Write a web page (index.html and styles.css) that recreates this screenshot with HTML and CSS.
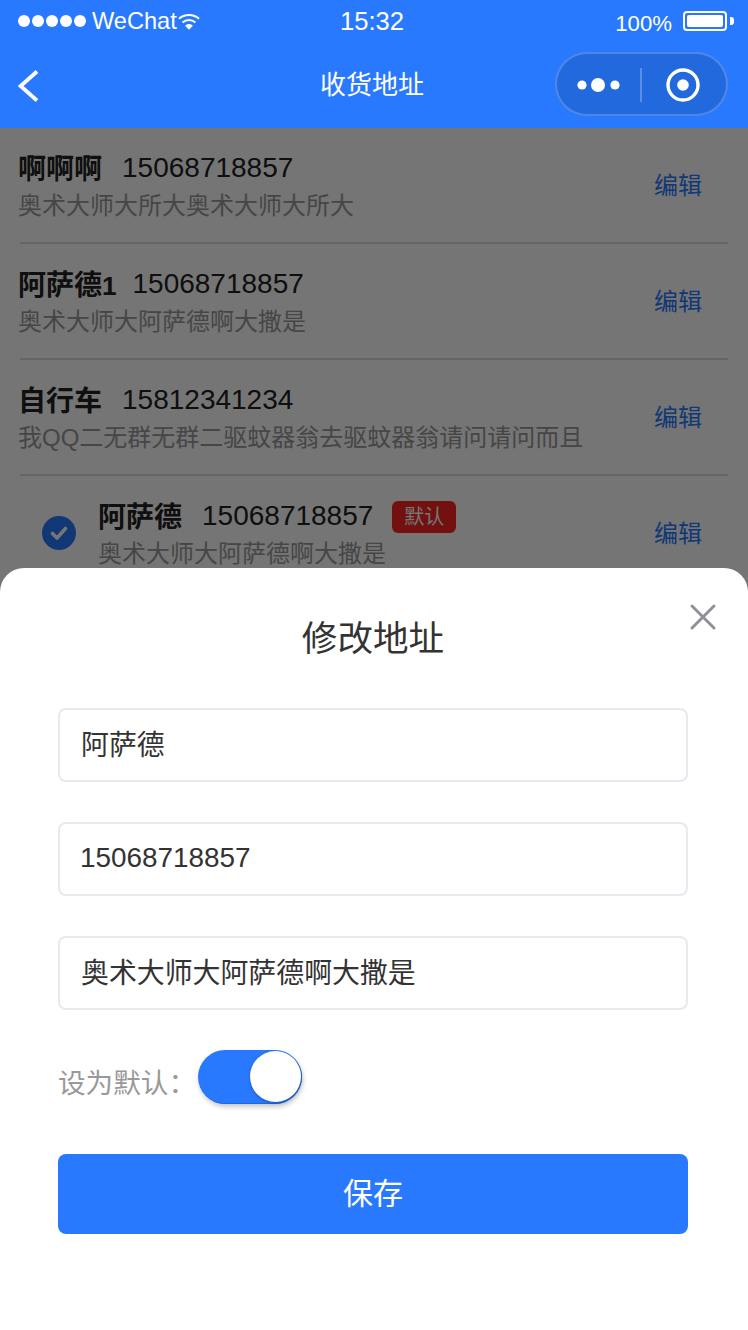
FILE: index.html
```html
<!DOCTYPE html>
<html lang="zh-CN">
<head>
<meta charset="utf-8">
<title>收货地址</title>
<link rel="stylesheet" href="styles.css">
</head>
<body>
<div class="app">
  <header class="top">
    <div class="status">
      <div class="status-left">
        <span class="signal"><i></i><i></i><i></i><i></i><i></i></span>
        <span class="carrier">WeChat</span>
        <svg class="wifi" width="22" height="18" viewBox="0 0 24 18"><path d="M1 5.5C7 0 17 0 23 5.5" fill="none" stroke="#fff" stroke-width="2.2"/><path d="M5 9.5C9 6 15 6 19 9.5" fill="none" stroke="#fff" stroke-width="2.2"/><path d="M12 17.5L7.8 13C10 10.6 14 10.6 16.2 13Z" fill="#fff"/></svg>
      </div>
      <span class="clock">15:32</span>
      <div class="status-right">
        <span class="percent">100%</span>
        <span class="battery"><span class="battery-fill"></span></span>
        <span class="battery-tip"></span>
      </div>
    </div>
    <nav class="nav">
      <svg class="back" width="24" height="36" viewBox="0 0 24 36"><path d="M20 3.5L3.6 18L20 32.5" fill="none" stroke="#fff" stroke-width="3.8"/></svg>
      <h1 class="nav-title">收货地址</h1>
      <div class="capsule">
        <svg class="capsule-dots" width="44" height="16" viewBox="0 0 44 16"><circle cx="5" cy="8" r="4.6" fill="#fff"/><circle cx="21" cy="8" r="7" fill="#fff"/><circle cx="38" cy="8" r="4.6" fill="#fff"/></svg>
        <span class="capsule-line"></span>
        <svg class="capsule-ring" width="36" height="36" viewBox="0 0 36 36"><circle cx="18" cy="18" r="15" fill="none" stroke="#fff" stroke-width="3.4"/><circle cx="18" cy="18" r="5.8" fill="#fff"/></svg>
      </div>
    </nav>
  </header>

  <main class="list">
    <div class="row">
      <div class="info">
        <div class="line"><b class="name">啊啊啊</b><span class="phone">15068718857</span></div>
        <div class="addr">奥术大师大所大奥术大师大所大</div>
      </div>
      <span class="edit">编辑</span>
    </div>
    <div class="row">
      <div class="info">
        <div class="line"><b class="name">阿萨德<span class="name-digit">1</span></b><span class="phone">15068718857</span></div>
        <div class="addr">奥术大师大阿萨德啊大撒是</div>
      </div>
      <span class="edit">编辑</span>
    </div>
    <div class="row">
      <div class="info">
        <div class="line"><b class="name">自行车</b><span class="phone">15812341234</span></div>
        <div class="addr">我QQ二无群无群二驱蚊器翁去驱蚊器翁请问请问而且</div>
      </div>
      <span class="edit">编辑</span>
    </div>
    <div class="row">
      <svg class="check" width="34" height="34" viewBox="0 0 34 34"><circle cx="17" cy="17" r="17" fill="#2979ff"/><path d="M10.5 17.5L15 22L23.5 12.5" fill="none" stroke="#fff" stroke-width="3.6" stroke-linecap="round" stroke-linejoin="round"/></svg>
      <div class="info">
        <div class="line"><b class="name">阿萨德</b><span class="phone">15068718857</span><span class="tag">默认</span></div>
        <div class="addr">奥术大师大阿萨德啊大撒是</div>
      </div>
      <span class="edit">编辑</span>
    </div>
  </main>

  <div class="mask"></div>

  <section class="sheet">
    <h2 class="sheet-title">修改地址</h2>
    <svg class="close" width="28" height="28" viewBox="0 0 28 28"><path d="M3 3L25 25M25 3L3 25" fill="none" stroke="#8e9197" stroke-width="3" stroke-linecap="round"/></svg>
    <div class="field">阿萨德</div>
    <div class="field field-num">15068718857</div>
    <div class="field">奥术大师大阿萨德啊大撒是</div>
    <div class="default-row">
      <span class="default-label">设为默认：</span>
      <span class="switch"><span class="knob"></span></span>
    </div>
    <button class="save">保存</button>
  </section>
</div>
</body>
</html>
```
FILE: styles.css
```css
* { box-sizing: border-box; }
html, body { margin: 0; padding: 0; }
body {
  font-family: "Liberation Sans", "Noto Sans CJK SC", sans-serif;
  color: #222;
  background: #fff;
}
.app {
  position: relative;
  width: 748px;
  height: 1330px;
  overflow: hidden;
}

/* Blue header: status bar plus navigation bar */
.top {
  position: relative;
  z-index: 2;
  height: 128px;
  background: #2979ff;
  color: #fff;
}
.status {
  height: 40px;
  padding: 2px 14px 0 18px;
  display: flex;
  align-items: center;
  justify-content: space-between;
}
.status-left { display: flex; align-items: center; width: 200px; }
.signal { display: flex; gap: 2px; margin-right: 6px; }
.signal i { width: 12px; height: 12px; border-radius: 50%; background: #fff; }
.carrier { font-size: 23.6px; }
.wifi { margin-left: 1px; margin-top: 2px; }
.clock { font-size: 25.6px; margin-left: -8px; }
.status-right { display: flex; align-items: center; width: 200px; justify-content: flex-end; }
.percent { font-size: 22.2px; margin-right: 11px; margin-top: 5px; }
.battery {
  width: 44px;
  height: 20px;
  margin: -1px 0 0 0;
  border: 2px solid #fff;
  border-radius: 4px;
  padding: 2px;
  display: flex;
}
.battery-fill { flex: 1; background: #fff; border-radius: 2px; }
.battery-tip { width: 4px; height: 8px; margin: -1px 0 0 3px; background: #fff; border-radius: 0 3px 3px 0; }
.nav {
  height: 88px;
  padding: 0 20px 0 17px;
  display: flex;
  align-items: center;
  justify-content: space-between;
  position: relative;
}
.back { margin-top: 4px; }
.nav-title {
  position: absolute;
  left: 0;
  right: 4px;
  top: 27px;
  margin: 0;
  text-align: center;
  font-size: 26px;
  line-height: 36px;
  font-weight: 400;
}
.capsule {
  width: 173px;
  height: 64px;
  margin-top: -1px;
  border-radius: 32px;
  background: rgba(0, 0, 0, 0.13);
  border: 2px solid rgba(255, 255, 255, 0.2);
  display: flex;
  align-items: center;
  padding-left: 20px;
}
.capsule-dots, .capsule-ring { margin-top: 2px; }
.capsule-line { width: 2px; height: 34px; margin: 2px 23px 0 19px; background: rgba(255, 255, 255, 0.25); }

/* Address rows */
.list { padding: 0 20px; }
.row {
  height: 116px;
  border-bottom: 2px solid #ddd;
  display: flex;
  align-items: center;
  color: #222;
}
.info { flex: 1; min-width: 0; margin-left: -2px; }
.line { display: flex; align-items: center; height: 40px; }
.name { font-size: 28px; font-weight: 700; margin: -2px 20px 0 0; color: #222; }
.name-digit { font-size: 26px; letter-spacing: -4px; }
.phone { font-size: 28px; color: #222; }
.addr { font-size: 24px; line-height: 34px; margin-top: 1px; color: #999; }
.edit { font-size: 24px; margin: -4px 26px 0 0; color: #2979ff; }
.check { margin: 0 24px 0 22px; flex: none; }
.tag {
  margin: 2px 0 0 19px;
  width: 64px;
  height: 32px;
  border-radius: 6px;
  background: #fa2424;
  color: #fff;
  font-size: 20px;
  line-height: 32px;
  text-align: center;
}

/* Dimmed layer behind the edit sheet */
.mask {
  position: absolute;
  left: 0;
  right: 0;
  top: 128px;
  bottom: 0;
  background: rgba(0, 0, 0, 0.54);
  z-index: 1;
}

/* Edit sheet */
.sheet {
  position: absolute;
  z-index: 3;
  left: 0;
  right: 0;
  top: 568px;
  bottom: 0;
  background: #fff;
  border-radius: 24px 24px 0 0;
  padding: 0 60px 0 58px;
  display: flex;
  flex-direction: column;
}
.sheet-title {
  margin: 46px 0 44px;
  text-align: center;
  font-size: 35.6px;
  line-height: 50px;
  font-weight: 400;
  color: #333;
}
.close { position: absolute; top: 35px; right: 31px; }
.field {
  height: 74px;
  margin-bottom: 40px;
  border: 2px solid #e8e9ee;
  border-radius: 8px;
  padding: 0 21px;
  font-size: 27.9px;
  line-height: 72px;
  color: #333;
}
.field-num { padding-left: 20px; line-height: 68px; }
.default-row { display: flex; align-items: center; height: 54px; }
.default-label { font-size: 27.6px; padding-top: 8px; color: #999; width: 140px; }
.switch {
  width: 104px;
  height: 54px;
  border-radius: 27px;
  background: #2979ff;
  box-shadow: inset -1px -1px 1px #1f66d8, 1px 3px 5px rgba(0, 0, 0, 0.22);
  position: relative;
}
.knob {
  position: absolute;
  right: 1px;
  top: 1px;
  width: 51px;
  height: 51px;
  border-radius: 50%;
  background: #fff;
  box-shadow: 0 1px 3px rgba(0, 0, 0, 0.3);
}
.save {
  margin-top: 50px;
  height: 80px;
  width: 630px;
  padding: 0 0 6px;
  border: 0;
  border-radius: 8px;
  background: #2979ff;
  color: #fff;
  font-family: inherit;
  font-size: 30px;
}
```
